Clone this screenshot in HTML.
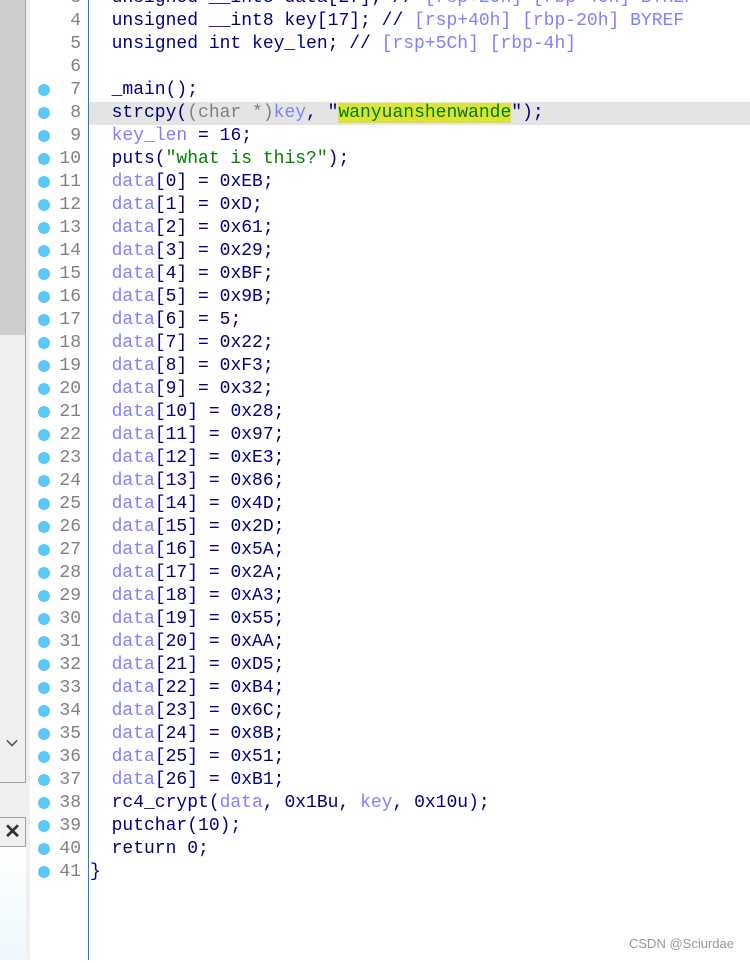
<!DOCTYPE html>
<html><head><meta charset="utf-8"><style>
body{margin:0;width:750px;height:960px;background:#fff;position:relative;overflow:hidden;font-family:"Liberation Mono",monospace;}
#lp{position:absolute;left:0;top:0;width:27px;height:960px;background:#f0f0f0;}
#track{position:absolute;left:0;top:0;width:25px;height:782px;border-right:1px solid #a0a0a0;border-bottom:1px solid #a0a0a0;background:#f0f0f0;}
#thumb{position:absolute;left:0;top:0;width:25px;height:335px;background:#cdcdcd;}
#dn{position:absolute;left:7px;top:736px;width:8px;height:8px;border-right:2px solid #555;border-bottom:2px solid #555;transform:rotate(45deg) scale(.8);}
#xb{position:absolute;left:0;top:817px;width:25px;height:28px;border:1px solid #a0a0a0;border-left:none;background:#f0f0f0;font:bold 20px "Liberation Sans",sans-serif;color:#333;text-align:center;line-height:28px;}
#grad{position:absolute;left:0;top:847px;width:26px;height:113px;background:linear-gradient(#fff,#eef8fc);}
#strip{position:absolute;left:27px;top:0;width:3px;height:960px;background:#f0f0f0;}
#vl{position:absolute;left:88px;top:0;width:1px;height:960px;background:#1a7fd0;}
#lines{position:absolute;left:0;top:3px;width:750px;height:960px;}
.ln{position:absolute;left:30px;width:720px;height:23px;font-size:18px;line-height:23px;white-space:pre;}
.num{position:absolute;right:669px;color:#808080;}
.dot{position:absolute;left:8px;top:5px;width:12px;height:12px;border-radius:50%;background:#5cc8fa;}
.code{position:absolute;left:60px;color:#000080;}
.v{color:#8080ff}.s{color:#008000}.g{color:#808080}
.hl{background:#e4e4e4;}
.y{background:#dde23a;}
#wm{position:absolute;left:629px;top:936px;font:13px "Liberation Sans",sans-serif;color:#999;}
</style></head><body>
<div id="lp"><div id="track"><div id="thumb"></div><div id="dn"></div></div><div id="xb">✕</div><div id="grad"></div></div>
<div id="strip"></div>
<div id="lines">
<div class="ln" style="top:-16px"><span class="num">3</span><span class="code">  unsigned __int8 data[27]; // <span class="v">[rsp+20h] [rbp-40h] BYREF</span></span></div>
<div class="ln" style="top:7px"><span class="num">4</span><span class="code">  unsigned __int8 key[17]; // <span class="v">[rsp+40h] [rbp-20h] BYREF</span></span></div>
<div class="ln" style="top:30px"><span class="num">5</span><span class="code">  unsigned int key_len; // <span class="v">[rsp+5Ch] [rbp-4h]</span></span></div>
<div class="ln" style="top:53px"><span class="num">6</span></div>
<div class="ln" style="top:76px"><span class="dot"></span><span class="num">7</span><span class="code">  _main();</span></div>
<div class="ln hl" style="top:99px;left:89px;width:661px"></div>
<div class="ln" style="top:99px"><span class="dot"></span><span class="num">8</span><span class="code">  strcpy(<span class="g">(char *)</span><span class="v">key</span>, "<span class="s y">wanyuanshenwande</span>");</span></div>
<div class="ln" style="top:122px"><span class="dot"></span><span class="num">9</span><span class="code">  <span class="v">key_len</span> = 16;</span></div>
<div class="ln" style="top:145px"><span class="dot"></span><span class="num">10</span><span class="code">  puts(<span class="s">"what is this?"</span>);</span></div>
<div class="ln" style="top:168px"><span class="dot"></span><span class="num">11</span><span class="code">  <span class="v">data</span>[0] = 0xEB;</span></div>
<div class="ln" style="top:191px"><span class="dot"></span><span class="num">12</span><span class="code">  <span class="v">data</span>[1] = 0xD;</span></div>
<div class="ln" style="top:214px"><span class="dot"></span><span class="num">13</span><span class="code">  <span class="v">data</span>[2] = 0x61;</span></div>
<div class="ln" style="top:237px"><span class="dot"></span><span class="num">14</span><span class="code">  <span class="v">data</span>[3] = 0x29;</span></div>
<div class="ln" style="top:260px"><span class="dot"></span><span class="num">15</span><span class="code">  <span class="v">data</span>[4] = 0xBF;</span></div>
<div class="ln" style="top:283px"><span class="dot"></span><span class="num">16</span><span class="code">  <span class="v">data</span>[5] = 0x9B;</span></div>
<div class="ln" style="top:306px"><span class="dot"></span><span class="num">17</span><span class="code">  <span class="v">data</span>[6] = 5;</span></div>
<div class="ln" style="top:329px"><span class="dot"></span><span class="num">18</span><span class="code">  <span class="v">data</span>[7] = 0x22;</span></div>
<div class="ln" style="top:352px"><span class="dot"></span><span class="num">19</span><span class="code">  <span class="v">data</span>[8] = 0xF3;</span></div>
<div class="ln" style="top:375px"><span class="dot"></span><span class="num">20</span><span class="code">  <span class="v">data</span>[9] = 0x32;</span></div>
<div class="ln" style="top:398px"><span class="dot"></span><span class="num">21</span><span class="code">  <span class="v">data</span>[10] = 0x28;</span></div>
<div class="ln" style="top:421px"><span class="dot"></span><span class="num">22</span><span class="code">  <span class="v">data</span>[11] = 0x97;</span></div>
<div class="ln" style="top:444px"><span class="dot"></span><span class="num">23</span><span class="code">  <span class="v">data</span>[12] = 0xE3;</span></div>
<div class="ln" style="top:467px"><span class="dot"></span><span class="num">24</span><span class="code">  <span class="v">data</span>[13] = 0x86;</span></div>
<div class="ln" style="top:490px"><span class="dot"></span><span class="num">25</span><span class="code">  <span class="v">data</span>[14] = 0x4D;</span></div>
<div class="ln" style="top:513px"><span class="dot"></span><span class="num">26</span><span class="code">  <span class="v">data</span>[15] = 0x2D;</span></div>
<div class="ln" style="top:536px"><span class="dot"></span><span class="num">27</span><span class="code">  <span class="v">data</span>[16] = 0x5A;</span></div>
<div class="ln" style="top:559px"><span class="dot"></span><span class="num">28</span><span class="code">  <span class="v">data</span>[17] = 0x2A;</span></div>
<div class="ln" style="top:582px"><span class="dot"></span><span class="num">29</span><span class="code">  <span class="v">data</span>[18] = 0xA3;</span></div>
<div class="ln" style="top:605px"><span class="dot"></span><span class="num">30</span><span class="code">  <span class="v">data</span>[19] = 0x55;</span></div>
<div class="ln" style="top:628px"><span class="dot"></span><span class="num">31</span><span class="code">  <span class="v">data</span>[20] = 0xAA;</span></div>
<div class="ln" style="top:651px"><span class="dot"></span><span class="num">32</span><span class="code">  <span class="v">data</span>[21] = 0xD5;</span></div>
<div class="ln" style="top:674px"><span class="dot"></span><span class="num">33</span><span class="code">  <span class="v">data</span>[22] = 0xB4;</span></div>
<div class="ln" style="top:697px"><span class="dot"></span><span class="num">34</span><span class="code">  <span class="v">data</span>[23] = 0x6C;</span></div>
<div class="ln" style="top:720px"><span class="dot"></span><span class="num">35</span><span class="code">  <span class="v">data</span>[24] = 0x8B;</span></div>
<div class="ln" style="top:743px"><span class="dot"></span><span class="num">36</span><span class="code">  <span class="v">data</span>[25] = 0x51;</span></div>
<div class="ln" style="top:766px"><span class="dot"></span><span class="num">37</span><span class="code">  <span class="v">data</span>[26] = 0xB1;</span></div>
<div class="ln" style="top:789px"><span class="dot"></span><span class="num">38</span><span class="code">  rc4_crypt(<span class="v">data</span>, 0x1Bu, <span class="v">key</span>, 0x10u);</span></div>
<div class="ln" style="top:812px"><span class="dot"></span><span class="num">39</span><span class="code">  putchar(10);</span></div>
<div class="ln" style="top:835px"><span class="dot"></span><span class="num">40</span><span class="code">  return 0;</span></div>
<div class="ln" style="top:858px"><span class="dot"></span><span class="num">41</span><span class="code">}</span></div>
</div>
<div id="vl"></div>
<div id="wm">CSDN @Sciurdae</div>
</body></html>
